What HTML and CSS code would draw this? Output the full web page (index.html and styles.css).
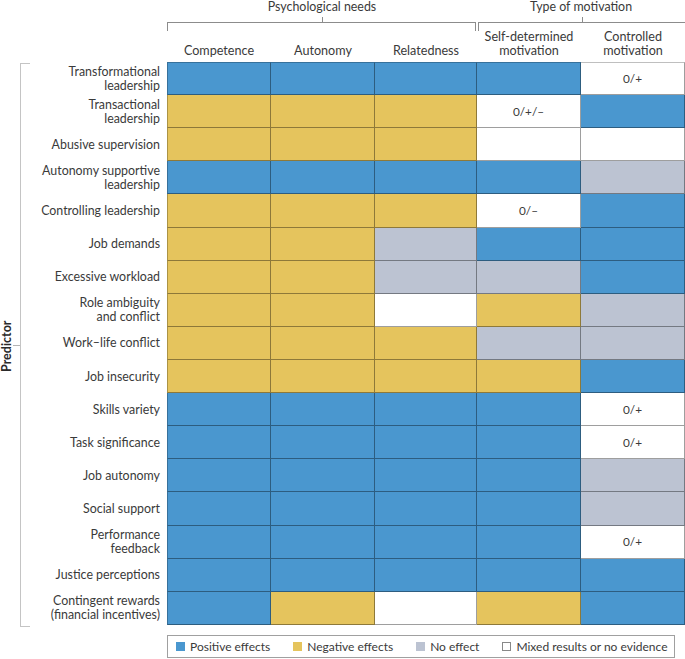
FILE: index.html
```html
<!DOCTYPE html>
<html>
<head>
<meta charset="utf-8">
<link rel="stylesheet" href="styles.css">
</head>
<body>
<div class="figure">
  <div class="head">
    <div class="group-title g1">Psychological needs</div>
    <div class="group-title g2">Type of motivation</div>
    <div class="bracket b1"><span class="tick"></span></div>
    <div class="bracket b2"><span class="tick"></span></div>
    <div class="colhead c1">Competence</div>
    <div class="colhead c2">Autonomy</div>
    <div class="colhead c3">Relatedness</div>
    <div class="colhead c4">Self-determined<br>motivation</div>
    <div class="colhead c5">Controlled<br>motivation</div>
  </div>
  <div class="body">
    <div class="predictor">
      <div class="pbracket"><span class="ptick"></span></div>
      <div class="plabel">Predictor</div>
    </div>
    <div class="label">Transformational<br>leadership</div>
    <div class="cell b first"></div><div class="cell b"></div><div class="cell b"></div><div class="cell b"></div><div class="cell w">0/+</div>
    <div class="label">Transactional<br>leadership</div>
    <div class="cell y first"></div><div class="cell y"></div><div class="cell y"></div><div class="cell w">0/+/–</div><div class="cell b"></div>
    <div class="label">Abusive supervision</div>
    <div class="cell y first"></div><div class="cell y"></div><div class="cell y"></div><div class="cell w"></div><div class="cell w"></div>
    <div class="label">Autonomy supportive<br>leadership</div>
    <div class="cell b first"></div><div class="cell b"></div><div class="cell b"></div><div class="cell b"></div><div class="cell g"></div>
    <div class="label">Controlling leadership</div>
    <div class="cell y first"></div><div class="cell y"></div><div class="cell y"></div><div class="cell w">0/–</div><div class="cell b"></div>
    <div class="label">Job demands</div>
    <div class="cell y first"></div><div class="cell y"></div><div class="cell g"></div><div class="cell b"></div><div class="cell b"></div>
    <div class="label">Excessive workload</div>
    <div class="cell y first"></div><div class="cell y"></div><div class="cell g"></div><div class="cell g"></div><div class="cell b"></div>
    <div class="label">Role ambiguity<br>and conflict</div>
    <div class="cell y first"></div><div class="cell y"></div><div class="cell w"></div><div class="cell y"></div><div class="cell g"></div>
    <div class="label">Work–life conflict</div>
    <div class="cell y first"></div><div class="cell y"></div><div class="cell y"></div><div class="cell g"></div><div class="cell g"></div>
    <div class="label">Job insecurity</div>
    <div class="cell y first"></div><div class="cell y"></div><div class="cell y"></div><div class="cell y"></div><div class="cell b"></div>
    <div class="label">Skills variety</div>
    <div class="cell b first"></div><div class="cell b"></div><div class="cell b"></div><div class="cell b"></div><div class="cell w">0/+</div>
    <div class="label">Task significance</div>
    <div class="cell b first"></div><div class="cell b"></div><div class="cell b"></div><div class="cell b"></div><div class="cell w">0/+</div>
    <div class="label">Job autonomy</div>
    <div class="cell b first"></div><div class="cell b"></div><div class="cell b"></div><div class="cell b"></div><div class="cell g"></div>
    <div class="label">Social support</div>
    <div class="cell b first"></div><div class="cell b"></div><div class="cell b"></div><div class="cell b"></div><div class="cell g"></div>
    <div class="label">Performance<br>feedback</div>
    <div class="cell b first"></div><div class="cell b"></div><div class="cell b"></div><div class="cell b"></div><div class="cell w">0/+</div>
    <div class="label">Justice perceptions</div>
    <div class="cell b first"></div><div class="cell b"></div><div class="cell b"></div><div class="cell b"></div><div class="cell b"></div>
    <div class="label">Contingent rewards<br>(financial incentives)</div>
    <div class="cell b first"></div><div class="cell y"></div><div class="cell w"></div><div class="cell y"></div><div class="cell b"></div>
  </div>
  <div class="legend-row">
    <div class="legend">
      <div class="item"><span class="sw b"></span>Positive effects</div>
      <div class="item"><span class="sw y"></span>Negative effects</div>
      <div class="item"><span class="sw g"></span>No effect</div>
      <div class="item"><span class="sw w"></span>Mixed results or no evidence</div>
    </div>
  </div>
</div>
</body>
</html>
```

FILE: styles.css
```css
html, body {
  margin: 0;
  padding: 0;
  background: #fff;
}
body {
  font-family: Lato, "Liberation Sans", sans-serif;
  color: #3a3a3a;
  font-size: 12.4px;
  width: 685px;
  overflow: hidden;
}
.figure {
  width: 685px;
}
.head {
  display: grid;
  grid-template-columns: 167px 104px 104px 102px 104px 104px;
  grid-template-rows: 16px 14px 32px;
}
.group-title {
  grid-row: 1;
  text-align: center;
  line-height: 13px;
  font-size: 12.4px;
}
.g1 { grid-column: 2 / 5; }
.g2 { grid-column: 5 / 7; }
.bracket {
  grid-row: 2;
  position: relative;
  margin-top: 6px;
  height: 8px;
  border: 1px solid #8c8c8c;
  border-bottom: none;
}
.b1 { grid-column: 2 / 5; margin-right: 1px; }
.b2 { grid-column: 5 / 7; margin-left: 1px; margin-right: -2px; }
.tick {
  position: absolute;
  left: 50%;
  top: -6px;
  width: 1px;
  height: 5px;
  background: #8c8c8c;
}
.b2 .tick { left: 103px; }
.colhead {
  grid-row: 3;
  display: flex;
  align-items: flex-end;
  justify-content: center;
  text-align: center;
  line-height: 14px;
  padding-bottom: 4px;
  font-size: 12.6px;
}
.c1 { grid-column: 2; }
.c2 { grid-column: 3; }
.c3 { grid-column: 4; }
.c4 { grid-column: 5; }
.c5 { grid-column: 6; }

.body {
  display: grid;
  grid-template-columns: 35px 132px 104px 104px 102px 104px 104px;
  grid-template-rows: repeat(17, 33.12px);
}
.predictor {
  grid-column: 1;
  grid-row: 1 / 18;
  position: relative;
}
.pbracket {
  position: absolute;
  left: 20px;
  top: 1px;
  bottom: -2px;
  width: 9px;
  border: 1.3px solid #c4c4c4;
  border-right: none;
}
.ptick {
  position: absolute;
  left: -8px;
  top: 50%;
  width: 7px;
  height: 1px;
  background: #b4b4b4;
}
.plabel {
  position: absolute;
  left: 0;
  top: 252px;
  width: 13px;
  height: 64px;
  writing-mode: vertical-rl;
  transform: rotate(180deg);
  font-weight: bold;
  font-size: 12.5px;
  color: #2a2a2a;
  white-space: nowrap;
  line-height: 13px;
  text-align: center;
}
.label {
  grid-column: 2;
  display: flex;
  align-items: center;
  justify-content: flex-end;
  text-align: right;
  padding-right: 7px;
  line-height: 14px;
}
.cell {
  box-sizing: border-box;
  border-right: 1px solid rgba(0, 0, 0, 0.38);
  border-bottom: 1px solid rgba(0, 0, 0, 0.38);
  display: flex;
  align-items: center;
  justify-content: center;
  font-size: 11.8px;
}
.cell.first { border-left: 1px solid rgba(0, 0, 0, 0.25); }
.body > .cell:nth-child(-n+7) { border-top: 1px solid rgba(0, 0, 0, 0.25); }
.b { background: #4a97cf; }
.y { background: #e5c45d; }
.g { background: #bcc3d2; }
.w { background: #fff; }

.legend-row {
  display: flex;
  padding-left: 167px;
  padding-top: 10px;
}
.legend {
  box-sizing: border-box;
  width: 508px;
  height: 23px;
  border: 1px solid #a0a0a0;
  display: flex;
  align-items: center;
  gap: 23px;
  padding-left: 8px;
  font-size: 12px;
}
.item {
  display: flex;
  align-items: center;
  gap: 5px;
}
.sw {
  width: 9px;
  height: 9px;
  display: inline-block;
  box-sizing: border-box;
}
.sw.w { border: 1px solid #888; }
```
